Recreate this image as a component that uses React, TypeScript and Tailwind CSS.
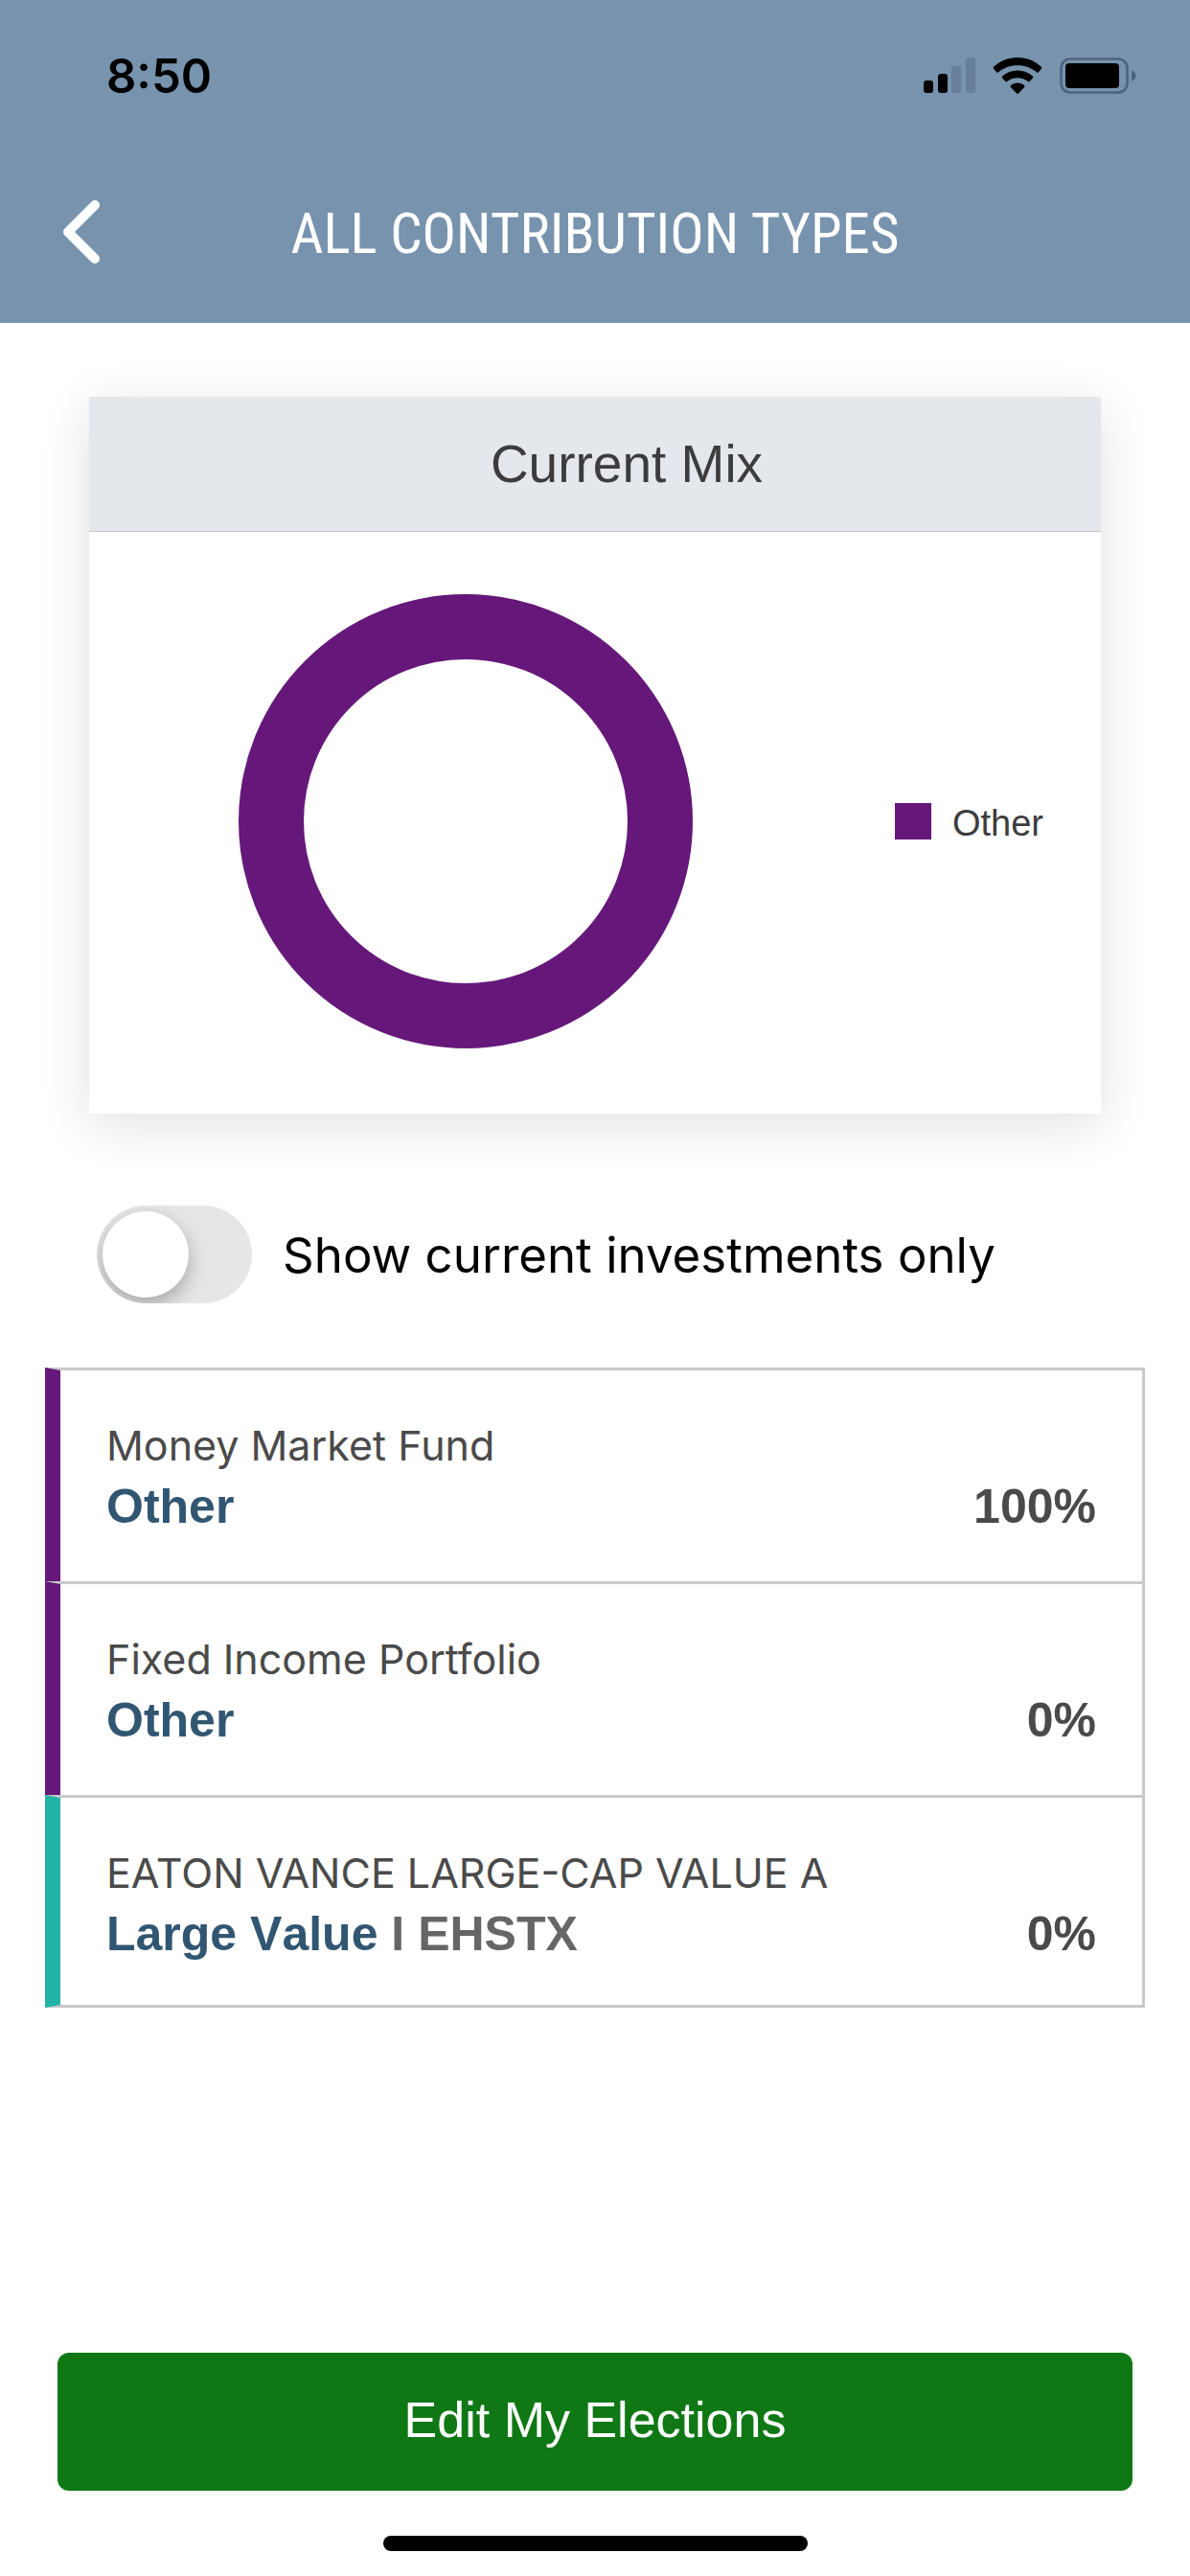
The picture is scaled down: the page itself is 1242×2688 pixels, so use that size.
import { useState } from "react";

type Fund = {
  name: string;
  category: string;
  ticker?: string;
  percent: number;
  accent: string;
};

const funds: Fund[] = [
  { name: "Money Market Fund", category: "Other", percent: 100, accent: "border-l-[#65187a]" },
  { name: "Fixed Income Portfolio", category: "Other", percent: 0, accent: "border-l-[#65187a]" },
  {
    name: "EATON VANCE LARGE-CAP VALUE A",
    category: "Large Value",
    ticker: "EHSTX",
    percent: 0,
    accent: "border-l-[#22b5a6]",
  },
];

function SignalIcon() {
  return (
    <svg width="54" height="38" viewBox="0 0 54 38" aria-hidden>
      <rect x="0" y="24" width="10" height="13" rx="3" />
      <rect x="15" y="17" width="10" height="20" rx="3" />
      <rect x="29" y="9" width="10" height="28" rx="3" fill="#677f98" />
      <rect x="44" y="0" width="10" height="37" rx="3" fill="#677f98" />
    </svg>
  );
}

function WifiIcon() {
  return (
    <svg width="52" height="40" viewBox="0 0 52 40" aria-hidden>
      <path d="M26 1C16.400 1 7.500 4.700 1 10.800Q.200 11.700 1 12.600L4.200 16.400Q5 17.200 5.900 16.400C11.200 11.800 18.300 9.200 26 9.200S40.800 11.800 46.100 16.400Q47 17.200 47.800 16.400L51 12.600Q51.800 11.700 51 10.800C44.500 4.700 35.600 1 26 1Z" />
      <path d="M26 14.600C19.900 14.600 14.300 16.800 10.100 20.400Q9.200 21.300 10 22.200L13.400 26Q14.200 26.800 15.100 26C18 23.700 21.800 22.300 26 22.300S34 23.700 36.900 26Q37.800 26.800 38.600 26L42 22.200Q42.800 21.300 41.900 20.400C37.700 16.800 32.100 14.600 26 14.600Z" />
      <path d="M26 27.600C23.300 27.600 20.900 28.500 19 30.100Q18.100 31 18.900 31.900L25.100 38.500Q26 39.300 26.900 38.500L33.100 31.900Q33.900 31 33 30.100C31.100 28.500 28.700 27.600 26 27.600Z" />
    </svg>
  );
}

function BatteryIcon() {
  return (
    <svg width="80" height="38" viewBox="0 0 80 38" aria-hidden>
      <rect x="1.500" y="1.500" width="69" height="35" rx="9.500" fill="none" stroke="#4d647d" strokeWidth="2.600" />
      <rect x="6" y="6" width="56" height="26" rx="4" />
      <path d="M75 13.500C78 14.400 79.600 16.500 79.600 19S78 23.600 75 24.500Z" fill="#4d647d" />
    </svg>
  );
}

function StatusBar() {
  return (
    <div className="flex h-[158px] items-center justify-between pr-14 pl-[111px] text-black">
      <span className="font-['Inter',sans-serif] text-[49px] leading-none font-semibold">8:50</span>
      <div className="flex items-center gap-[18px]">
        <SignalIcon />
        <WifiIcon />
        <BatteryIcon />
      </div>
    </div>
  );
}

function NavBar() {
  return (
    <div className="grid h-[179px] grid-cols-[1fr_auto_1fr] items-center px-16 pb-2">
      <button type="button" aria-label="Back" className="justify-self-start pb-1">
        <svg width="42" height="68" viewBox="0 0 42 68" fill="none" aria-hidden>
          <path d="M35 6L7 34L35 62" stroke="white" strokeWidth="10" strokeLinecap="round" strokeLinejoin="round" />
        </svg>
      </button>
      <h1 className="font-['Roboto_Condensed','Liberation_Sans_Narrow',sans-serif] text-[59px] leading-none text-white">
        ALL CONTRIBUTION TYPES
      </h1>
    </div>
  );
}

function CurrentMixCard() {
  return (
    <section className="mx-[93px] mt-[77px] bg-white shadow-[0_12px_50px_rgba(0,0,0,0.12)]">
      <h2 className="flex h-[141px] items-center justify-center border-b border-[#c3c4ca] bg-[#e4e7ec] pl-[66px] text-[55px] leading-none text-[#3c3c3e]">
        Current Mix
      </h2>
      <div className="flex h-[607px] items-center justify-between pr-[60px] pb-1 pl-[155px]">
        <svg width="476" height="476" viewBox="0 0 476 476" role="img" aria-label="Other 100%">
          <circle cx="238" cy="238" r="203" fill="none" stroke="#65187a" strokeWidth="68" />
        </svg>
        <div className="flex items-center gap-[22px]">
          <span className="size-[38px] bg-[#65187a]" />
          <span className="pt-1 text-[38px] leading-none text-[#3c3c3e]">Other</span>
        </div>
      </div>
    </section>
  );
}

function CurrentOnlyToggle() {
  const [checked, setChecked] = useState(false);

  return (
    <label className="mt-24 ml-[101px] flex items-center gap-8 self-start text-black">
      <input
        type="checkbox"
        role="switch"
        className="peer sr-only"
        checked={checked}
        onChange={(e) => setChecked(e.target.checked)}
      />
      <span className="flex h-[102px] w-[162px] items-center overflow-hidden rounded-full bg-[#e6e6e6] px-1.5 peer-checked:justify-end peer-checked:bg-[#0f7815]">
        <span className="size-[90px] rounded-full bg-white shadow-[0_8px_20px_rgba(0,0,0,0.28)]" />
      </span>
      <span className="font-['Inter',sans-serif] text-[51px] leading-none">Show current investments only</span>
    </label>
  );
}

function FundRow({ fund }: { fund: Fund }) {
  return (
    <li
      className={`flex items-end justify-between border-t-[3px] border-r-[3px] border-l-[16px] border-t-[#cacaca] border-r-[#cacaca] pt-12 pr-12 pb-12 pl-12 last:border-b-[3px] last:border-b-[#cacaca] last:pb-11 ${fund.accent}`}
    >
      <div>
        <p className="font-['Inter',sans-serif] text-[43px] leading-[60px] text-[#4a4a4a]">{fund.name}</p>
        <p className="mt-1 text-[50px] leading-[60px] font-bold text-[#315672] [font-kerning:none]">
          {fund.category}
          {fund.ticker && <span className="text-[#666666]"> I {fund.ticker}</span>}
        </p>
      </div>
      <p className="text-[50px] leading-[60px] font-bold text-[#4a4a4a]">{fund.percent}%</p>
    </li>
  );
}

export default function App() {
  return (
    <div className="flex min-h-screen flex-col bg-white font-['Liberation_Sans',Arial,sans-serif]">
      <header className="bg-[#7793ae]">
        <StatusBar />
        <NavBar />
      </header>

      <main className="flex flex-col">
        <CurrentMixCard />
        <CurrentOnlyToggle />
        <ul className="mx-[47px] mt-[67px]">
          {funds.map((fund) => (
            <FundRow key={fund.name} fund={fund} />
          ))}
        </ul>
      </main>

      <footer className="mt-auto flex flex-col items-center px-[60px] pb-[26px]">
        <button type="button" className="h-36 w-full rounded-xl bg-[#0f7815] pb-1 text-[52px] text-white">
          Edit My Elections
        </button>
        <div className="mt-[47px] h-4 w-[443px] rounded-full bg-black" />
      </footer>
    </div>
  );
}
